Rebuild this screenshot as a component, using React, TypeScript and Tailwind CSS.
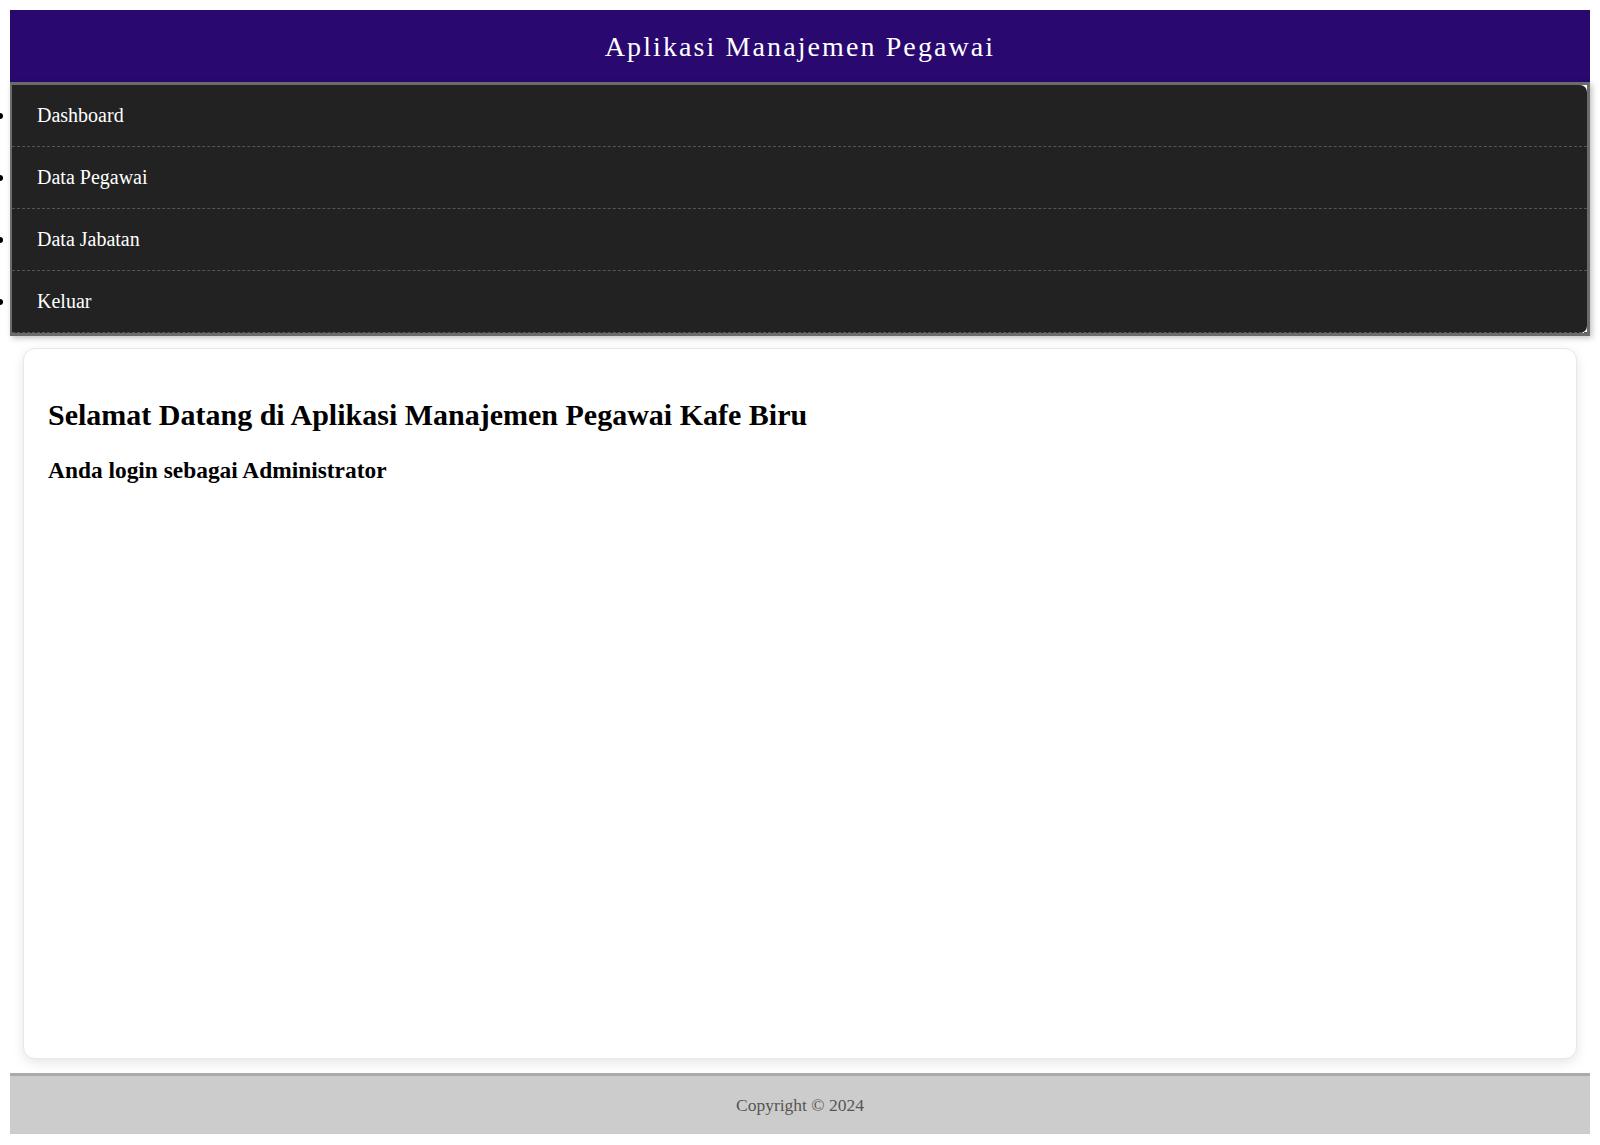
import React from "react";

const menu = ["Dashboard", "Data Pegawai", "Data Jabatan", "Keluar"];

export default function App() {
  return (
    <div className="m-[10px] font-['Liberation_Serif','Times_New_Roman',serif]">
      {/* Header */}
      <header className="bg-[#290970] h-[72px] flex items-center justify-center">
        <h1 className="text-white text-[28px] tracking-[2.1px] leading-none pt-[2px]">Aplikasi Manajemen Pegawai</h1>
      </header>

      {/* Menu */}
      <nav className="bg-white border-l-2 border-t-[3px] border-b-[3px] border-r-[3px] border-[#6b6b6b] shadow-[2px_2px_6px_rgba(0,0,0,0.25)]">
        <ul className="bg-[#222] rounded-r-[7px]">
          {menu.map((item) => (
            <li
              key={item}
              className="relative text-white text-[20px] leading-[23px] py-[19px] px-[25px] border-b border-dashed border-[#555]"
            >
              {/* bullet marker sits outside the menu, like the default disc */}
              <span className="absolute left-[-15px] top-[28px] w-[6px] h-[6px] rounded-full bg-black" />
              {item}
            </li>
          ))}
        </ul>
      </nav>

      {/* Content */}
      <main className="mx-[13px] mt-[12px] mb-[14px] bg-white border border-[#e8e8e8] rounded-[12px] shadow-[0_4px_12px_rgba(0,0,0,0.1)] h-[711px] px-[24px] pt-[48px]">
        <h2 className="text-[30px] font-bold leading-[36px] mb-[24px]">Selamat Datang di Aplikasi Manajemen Pegawai Kafe Biru</h2>
        <h3 className="text-[23.4px] font-bold leading-[27px]">Anda login sebagai Administrator</h3>
      </main>

      {/* Footer */}
      <footer className="bg-[#ccc] border-t-[3px] border-[#aaa] py-[20px] text-center text-[#555] text-[17.5px] leading-[18px]">
        Copyright © 2024
      </footer>
    </div>
  );
}
